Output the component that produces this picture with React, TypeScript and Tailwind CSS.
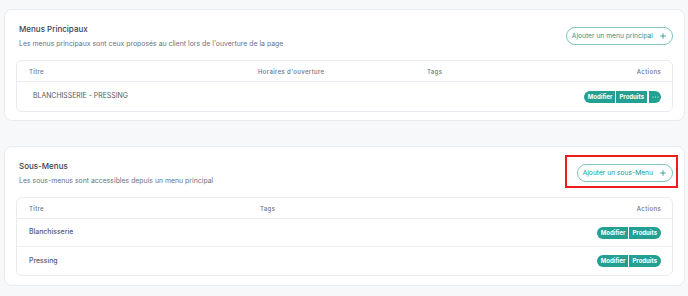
const teal = "bg-[#23a091]";

function Plus() {
  return (
    <svg width="6" height="6" viewBox="0 0 10 10" fill="none" stroke="currentColor" strokeWidth="1.4" strokeLinecap="round" aria-hidden="true">
      <path d="M5 1v8M1 5h8" />
    </svg>
  );
}

function Dots() {
  return (
    <svg width="7" height="2" viewBox="0 0 7 2" fill="currentColor" aria-hidden="true">
      <circle cx="1" cy="1" r="0.6" />
      <circle cx="3.5" cy="1" r="0.6" />
      <circle cx="6" cy="1" r="0.6" />
    </svg>
  );
}

function AddButton({ label }: { label: string }) {
  return (
    <button className="flex h-[18px] items-center gap-[7px] rounded-full border border-[#7cc6bd] bg-white pl-[5px] pr-[6px] text-[6.7px] leading-none text-[#239a8c]">
      {label}
      <Plus />
    </button>
  );
}

function Actions({ more }: { more?: boolean }) {
  return (
    <div className="flex items-center gap-px">
      <span className={`${teal} flex h-[12px] items-center rounded-l-full pl-[4px] pr-[3px] text-[6px] font-bold leading-none text-white`}>
        Modifier
      </span>
      <span className={`${teal} flex h-[12px] items-center pl-[3px] pr-[3px] text-[6px] font-bold leading-none text-white ${more ? "" : "rounded-r-full pr-[4px]"}`}>
        Produits
      </span>
      {more && (
        <span className={`${teal} ml-px flex h-[12px] w-[12px] items-center justify-center rounded-r-full text-white`}>
          <Dots />
        </span>
      )}
    </div>
  );
}

function CardHeader({ title, subtitle, children }: { title: string; subtitle: string; children: React.ReactNode }) {
  return (
    <div className="flex items-center justify-between pl-[3px]">
      <div className="flex flex-col gap-[4px]">
        <h2 className="text-[8px] leading-[11px] font-medium text-[#374151]">{title}</h2>
        <p className="text-[6.9px] leading-[9px] text-[#6b7280]">{subtitle}</p>
      </div>
      {children}
    </div>
  );
}

const th = "text-[6px] font-medium tracking-[0.06em] text-[#6b7280]";

export default function App() {
  return (
    <div className="h-[296px] w-[688px] overflow-hidden bg-[#f6f8fa] pl-[4px] pr-[3px] pt-[9px]" style={{ fontFamily: "Inter, 'Noto Sans', sans-serif" }}>
      {/* Menus principaux */}
      <section className="rounded-[8px] border border-[#e8ecf1] bg-white px-[11px] pt-[14px] pb-[8px]">
        <CardHeader title="Menus Principaux" subtitle="Les menus principaux sont ceux proposés au client lors de l'ouverture de la page">
          <AddButton label="Ajouter un menu principal" />
        </CardHeader>

        <div className="mt-[12px] overflow-hidden rounded-[6px] border border-[#e8ecf1]">
          <div className="grid h-[21px] grid-cols-[229px_169px_1fr_auto] items-center border-b border-[#e8ecf1] pr-[11px]">
            <span className={`${th} pl-[12px]`}>Titre</span>
            <span className={`${th} pl-[12px]`}>Horaires d'ouverture</span>
            <span className={`${th} pl-[12px]`}>Tags</span>
            <span className={th}>Actions</span>
          </div>
          <div className="grid h-[29px] grid-cols-[229px_169px_1fr_auto] items-center pr-[11px]">
            <span className="pl-[16px] text-[6.9px] text-[#525a67]">BLANCHISSERIE - PRESSING</span>
            <span />
            <span />
            <Actions more />
          </div>
        </div>
      </section>

      {/* Sous-menus */}
      <section className="mt-[25px] rounded-[8px] border border-[#e8ecf1] bg-white px-[11px] pt-[14px] pb-[9px]">
        <CardHeader title="Sous-Menus" subtitle="Les sous-menus sont accessibles depuis un menu principal">
          <div className="relative">
            <AddButton label="Ajouter un sous-Menu" />
            <span className="pointer-events-none absolute -top-[9px] -right-[5px] -bottom-[6px] -left-[12px] border-2 border-[#ee1c1c]" />
          </div>
        </CardHeader>

        <div className="mt-[12px] overflow-hidden rounded-[6px] border border-[#e8ecf1]">
          <div className="grid h-[21px] grid-cols-[231px_1fr_auto] items-center border-b border-[#e8ecf1] pr-[11px]">
            <span className={`${th} pl-[12px]`}>Titre</span>
            <span className={`${th} pl-[12px]`}>Tags</span>
            <span className={th}>Actions</span>
          </div>
          {["Blanchisserie", "Pressing"].map((name, i) => (
            <div key={name} className={`grid h-[28px] grid-cols-[231px_1fr_auto] items-center pr-[11px] ${i === 0 ? "border-b border-[#eef1f4]" : ""}`}>
              <span className="pl-[12px] text-[6.9px] font-medium text-[#525a67]">{name}</span>
              <span />
              <Actions />
            </div>
          ))}
        </div>
      </section>
    </div>
  );
}
